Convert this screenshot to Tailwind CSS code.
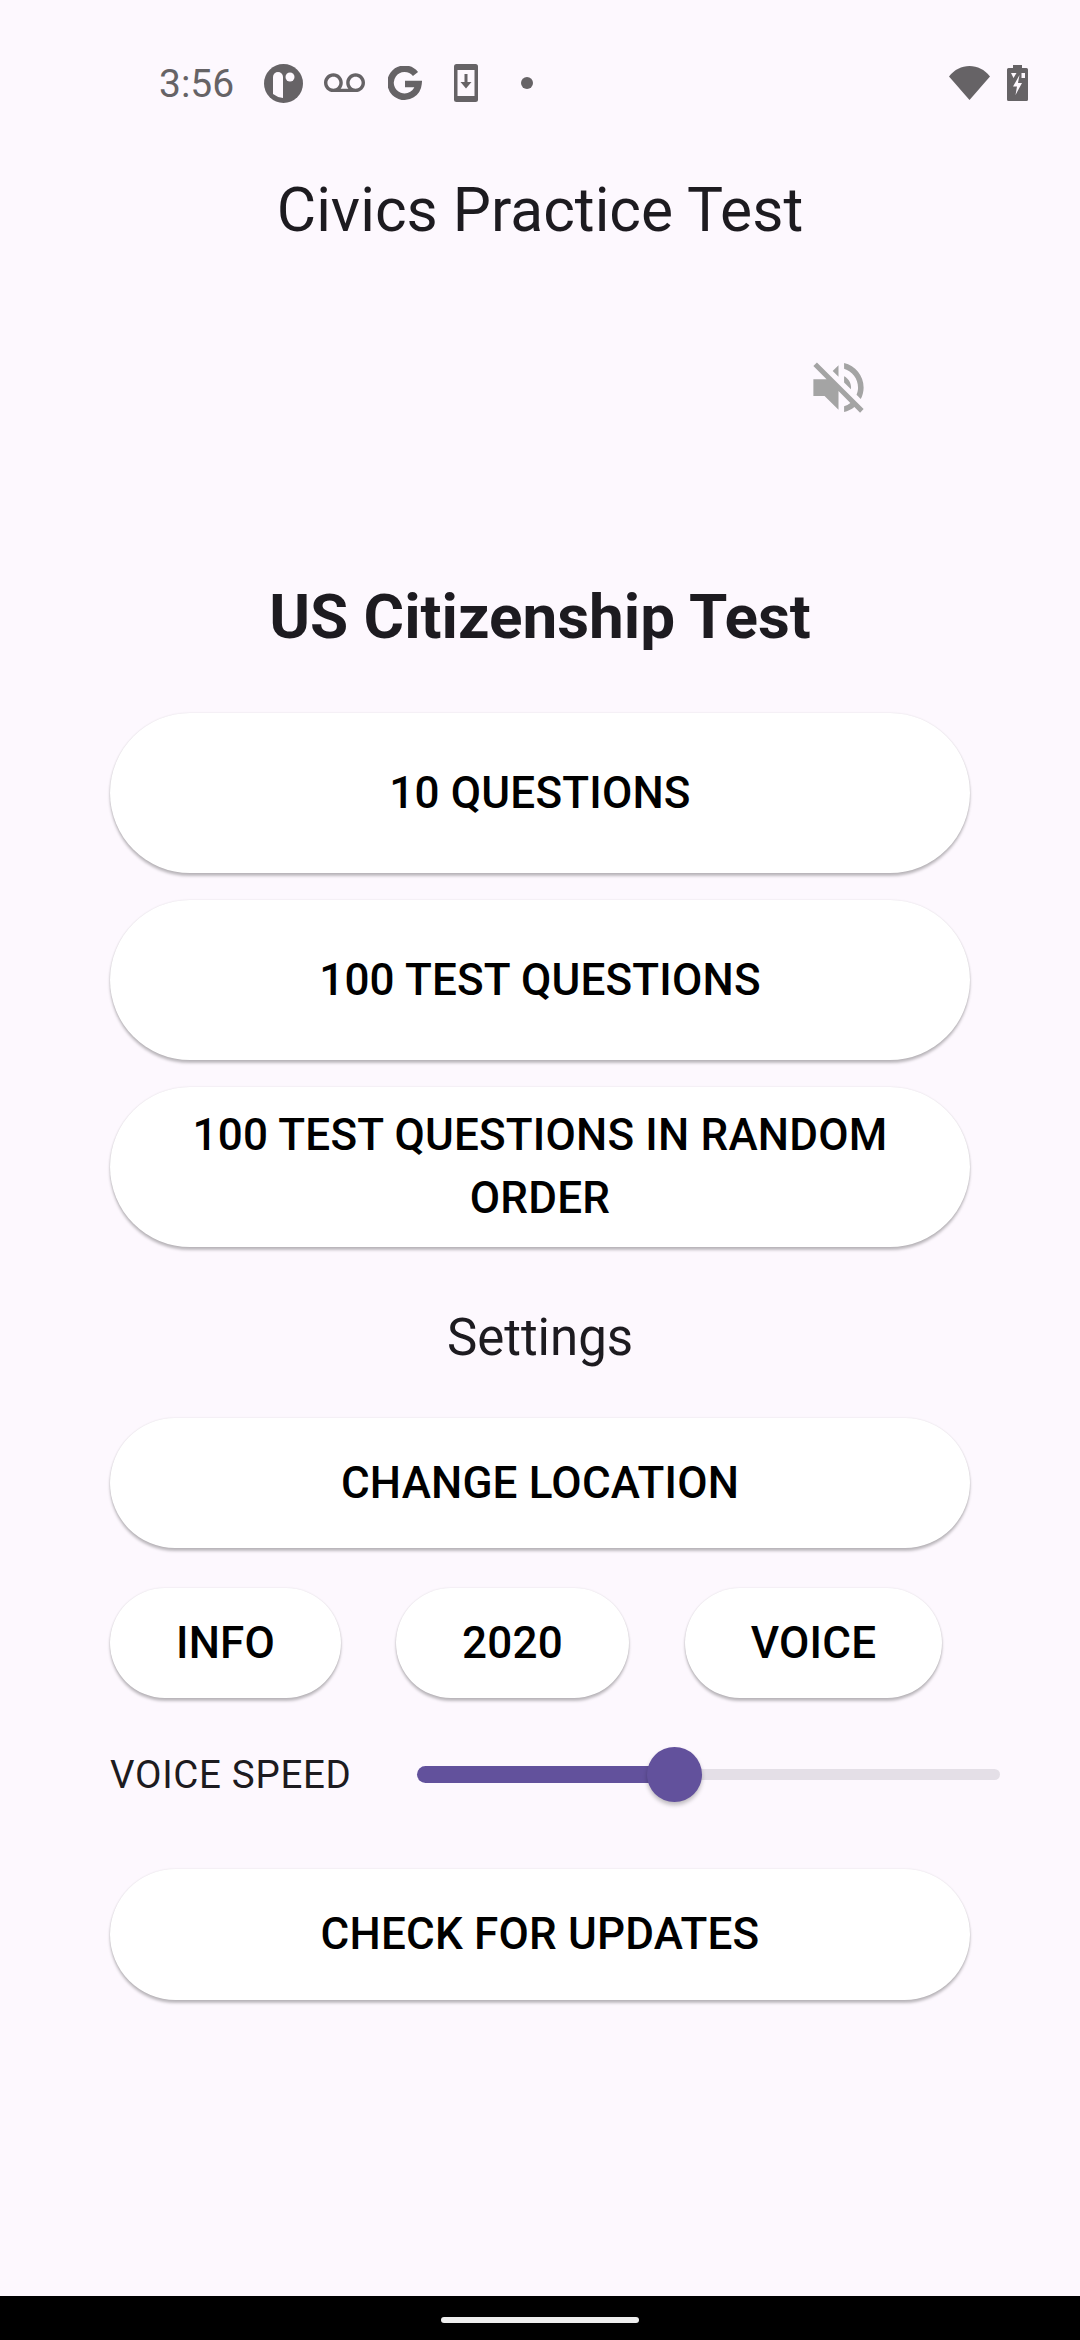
<!DOCTYPE html>
<html lang="en">
<head>
    <meta charset="UTF-8">
    <meta name="viewport" content="width=device-width, initial-scale=1.0">
    <title>Civics Practice Test</title>
    <script src="https://cdn.jsdelivr.net/npm/@tailwindcss/browser@4"></script>
</head>
<body class="bg-[#fdf8fe] font-['Roboto',sans-serif]">
    <div class="w-[1080px] h-[2340px] flex flex-col overflow-hidden">
        <!-- Status bar -->
        <div class="h-[166px] shrink-0 flex items-center pl-[159px] text-[#666366]">
            <span class="w-[73px] pt-[2px] text-[39px] leading-none">3:56</span>
            <svg class="ml-[32px] w-[39px] h-[39px]" viewBox="0 0 39 39"><circle cx="19.5" cy="19.5" r="19.5" fill="#666366"/><path d="M9 13a5 5 0 0 1 10 0v21a19 19 0 0 1-10-4z" fill="#fdf8fe"/><circle cx="26" cy="13" r="4.5" fill="#fdf8fe"/></svg>
            <svg class="ml-[21px] w-[41px] h-[41px]" viewBox="0 0 24 24" fill="#666366"><path d="M18.5 6C15.46 6 13 8.46 13 11.5c0 1.33.47 2.55 1.26 3.5H9.74c.79-.95 1.26-2.17 1.26-3.5C11 8.46 8.54 6 5.5 6S0 8.46 0 11.5 2.46 17 5.5 17h13c3.04 0 5.5-2.46 5.5-5.5S21.54 6 18.5 6zm-13 9C3.57 15 2 13.43 2 11.5S3.57 8 5.5 8 9 9.57 9 11.5 7.43 15 5.5 15zm13 0c-1.93 0-3.5-1.57-3.5-3.5S16.57 8 18.5 8 22 9.57 22 11.5 20.43 15 18.5 15z"/></svg>
            <svg class="ml-[23px] w-[34px] h-[35px]" viewBox="0 0 34 35" fill="none"><path d="M27.5 8A14 14 0 1 0 30.5 18H17" stroke="#666366" stroke-width="6.5"/></svg>
            <svg class="ml-[32px] w-[24px] h-[38px]" viewBox="0 0 24 38"><rect width="24" height="38" rx="2.5" fill="#666366"/><rect x="3.5" y="6" width="17" height="26" fill="#fdf8fe"/><path d="M10.5 10h3v8h4l-5.500 6.500L6.500 18h4z" fill="#666366"/></svg>
            <span class="ml-[43px] w-[12px] h-[12px] rounded-full bg-[#666366]"></span>
            <svg class="ml-[416px] w-[41px] h-[34px]" viewBox="0 0 41 34"><path d="M0 10.500C5.500 3.500 12.500 0 20.500 0S35.500 3.500 41 10.500L20.500 34z" fill="#666366"/></svg>
            <svg class="ml-[17px] w-[21px] h-[36px]" viewBox="0 0 21 36"><path d="M6 0h9v3h4.500A1.500 1.500 0 0 1 21 4.500V34.500A1.500 1.500 0 0 1 19.500 36H1.500A1.500 1.500 0 0 1 0 34.500V4.500A1.500 1.500 0 0 1 1.500 3H6z" fill="#666366"/><path d="M4 8h5.500L6.500 13zM14.500 8H18v5h-3.500z" fill="#fdf8fe"/><path d="M12.500 10 6 21.500h4L8.500 30 15 18h-4z" fill="#fdf8fe"/></svg>
        </div>

        <!-- App bar -->
        <div class="h-[88px] pt-[2px] shrink-0 flex items-center justify-center text-[60.5px] text-[#1d1b20]">Civics Practice Test</div>

        <!-- Mute toggle -->
        <div class="h-[67px] mt-[100px] shrink-0 flex justify-end pr-[208px]">
            <svg class="w-[67px] h-[67px]" viewBox="0 0 24 24" fill="#a4a4a4"><path d="M16.5 12c0-1.770-1.020-3.290-2.500-4.030v2.210l2.450 2.450c.03-.2.05-.41.05-.63zm2.500 0c0 .94-.2 1.820-.54 2.640l1.510 1.510C20.630 14.910 21 13.500 21 12c0-4.280-2.990-7.860-7-8.770v2.060c2.890.86 5 3.540 5 6.710zM4.270 3L3 4.270 7.730 9H3v6h4l5 5v-6.730l4.250 4.250c-.67.52-1.420.93-2.250 1.180v2.060c1.380-.31 2.630-.95 3.690-1.810L19.730 21 21 19.730l-9-9L4.270 3zM12 4L9.910 6.090 12 8.180V4z"/></svg>
        </div>

        <!-- Main menu -->
        <div class="flex flex-col px-[110px] text-[#1d1b20]">
            <h1 class="mt-[150px] h-[90px] flex items-center justify-center text-[62px] font-bold">US Citizenship Test</h1>
            <button class="mt-[52px] h-[160px] rounded-[80px] bg-white text-black text-[44px] tracking-[0.2px] font-medium shadow-[0_3px_3px_rgba(0,0,0,0.25),0_0_2px_rgba(0,0,0,0.12)]">10 QUESTIONS</button>
            <button class="mt-[27px] h-[160px] rounded-[80px] bg-white text-black text-[44px] tracking-[0.2px] font-medium shadow-[0_3px_3px_rgba(0,0,0,0.25),0_0_2px_rgba(0,0,0,0.12)]">100 TEST QUESTIONS</button>
            <button class="mt-[27px] h-[160px] rounded-[80px] bg-white text-black text-[44px] tracking-[0.2px] leading-[63px] font-medium px-[60px] shadow-[0_3px_3px_rgba(0,0,0,0.25),0_0_2px_rgba(0,0,0,0.12)]">100 TEST QUESTIONS IN RANDOM ORDER</button>
            <div class="mt-[60px] h-[60px] pt-[2px] flex items-center justify-center text-[51px]">Settings</div>
            <button class="mt-[51px] h-[130px] rounded-[65px] bg-white text-black text-[44px] tracking-[0.2px] font-medium shadow-[0_3px_3px_rgba(0,0,0,0.25),0_0_2px_rgba(0,0,0,0.12)]">CHANGE LOCATION</button>
            <div class="mt-[40px] flex">
                <button class="w-[231px] h-[110px] rounded-[55px] bg-white text-black text-[44px] tracking-[0.2px] font-medium shadow-[0_3px_3px_rgba(0,0,0,0.25),0_0_2px_rgba(0,0,0,0.12)]">INFO</button>
                <button class="ml-[55px] w-[233px] h-[110px] rounded-[55px] bg-white text-black text-[44px] tracking-[0.2px] font-medium shadow-[0_3px_3px_rgba(0,0,0,0.25),0_0_2px_rgba(0,0,0,0.12)]">2020</button>
                <button class="ml-[56px] w-[257px] h-[110px] rounded-[55px] bg-white text-black text-[44px] tracking-[0.2px] font-medium shadow-[0_3px_3px_rgba(0,0,0,0.25),0_0_2px_rgba(0,0,0,0.12)]">VOICE</button>
            </div>
            <div class="mt-[49px] h-[55px] flex items-center">
                <span class="w-[307px] shrink-0 text-[38.5px] tracking-[0.69px]">VOICE SPEED</span>
                <div class="relative w-[583px] shrink-0 h-[55px] flex items-center">
                    <div class="w-[250px] h-[17px] rounded-l-full bg-[#62519c]"></div>
                    <div class="flex-1 h-[11px] rounded-r-full bg-[#e4dfe7]"></div>
                    <div class="absolute left-[230px] top-0 w-[55px] h-[55px] rounded-full bg-[#62519c] shadow-[0_3px_4px_rgba(0,0,0,0.25)]"></div>
                </div>
            </div>
            <button class="mt-[67px] h-[131px] pb-[2px] rounded-[66px] bg-white text-black text-[44px] tracking-[0.2px] font-medium shadow-[0_3px_3px_rgba(0,0,0,0.25),0_0_2px_rgba(0,0,0,0.12)]">CHECK FOR UPDATES</button>
        </div>

        <!-- Navigation bar -->
        <div class="mt-auto h-[44px] shrink-0 bg-black flex justify-center pt-[21px]">
            <div class="w-[198px] h-[6px] rounded-full bg-[#eeeeee]"></div>
        </div>
    </div>
</body>
</html>
